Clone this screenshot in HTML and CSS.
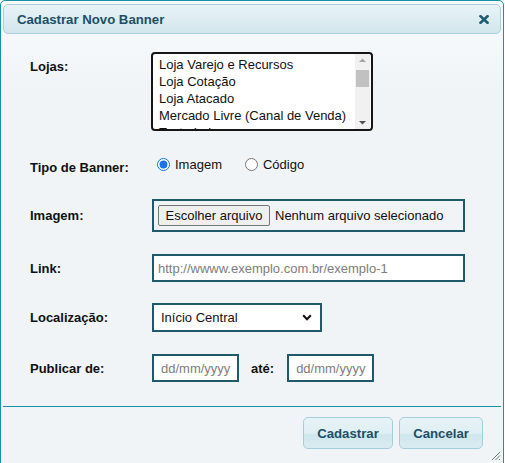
FILE: index.html
```html
<!DOCTYPE html>
<html lang="pt-BR">
<head>
<meta charset="utf-8">
<title>Cadastrar Novo Banner</title>
<link rel="stylesheet" href="styles.css">
</head>
<body>
<div class="dialog">
  <div class="titlebar">
    <span class="title">Cadastrar Novo Banner</span>
    <svg class="close" width="10" height="9" viewBox="0 0 10 9" aria-label="Fechar">
      <path d="M1.5 1.2 L8.5 7.8 M8.5 1.2 L1.5 7.8" stroke="#1e5a72" stroke-width="2.6" stroke-linecap="square" fill="none"/>
    </svg>
  </div>
  <div class="content">
    <div class="row row-lojas">
      <label class="lbl lbl-top">Lojas:</label>
      <div class="listbox">
        <div class="options">
          <div class="opt">Loja Varejo e Recursos</div>
          <div class="opt">Loja Cotação</div>
          <div class="opt">Loja Atacado</div>
          <div class="opt">Mercado Livre (Canal de Venda)</div>
          <div class="opt">Teste Loja</div>
        </div>
        <div class="scrollbar">
          <svg class="arrow" width="15" height="12" viewBox="0 0 15 12"><path d="M4 8 L7.5 4.5 L11 8 Z" fill="#a3a3a3"/></svg>
          <div class="thumb"></div>
          <div class="track"></div>
          <svg class="arrow" width="15" height="12" viewBox="0 0 15 12"><path d="M4 4 L7.5 7.5 L11 4 Z" fill="#505050"/></svg>
        </div>
      </div>
    </div>
    <div class="row row-tipo">
      <label class="lbl lbl-tipo">Tipo de Banner:</label>
      <div class="radios">
        <label class="radio"><input type="radio" name="tipo" checked> Imagem</label>
        <label class="radio radio-2"><input type="radio" name="tipo"> Código</label>
      </div>
    </div>
    <div class="row row-img">
      <label class="lbl">Imagem:</label>
      <div class="filebox">
        <button class="filebtn" type="button">Escolher arquivo</button>
        <span class="filename">Nenhum arquivo selecionado</span>
      </div>
    </div>
    <div class="row row-link">
      <label class="lbl">Link:</label>
      <input class="field field-link" type="text" placeholder="http://wwww.exemplo.com.br/exemplo-1">
    </div>
    <div class="row row-loc">
      <label class="lbl">Localização:</label>
      <div class="selectbox">
        <select class="sel">
          <option>Início Central</option>
        </select>
        <svg class="chev" width="10" height="7" viewBox="0 0 10 7"><path d="M1.2 1.3 L5 5.2 L8.8 1.3" stroke="#111" stroke-width="2" fill="none"/></svg>
      </div>
    </div>
    <div class="row row-pub">
      <label class="lbl">Publicar de:</label>
      <input class="field field-date" type="text" placeholder="dd/mm/yyyy">
      <span class="ate">até:</span>
      <input class="field field-date" type="text" placeholder="dd/mm/yyyy">
    </div>
  </div>
  <div class="buttonpane">
    <button class="btn btn-cad" type="button">Cadastrar</button>
    <button class="btn btn-can" type="button">Cancelar</button>
  </div>
  <svg class="resize" width="12" height="12" viewBox="0 0 12 12">
    <path d="M11 3 L3 11 M11 6.5 L6.5 11 M11 10 L10 11" stroke="#777" stroke-width="1" fill="none"/>
  </svg>
</div>
</body>
</html>
```
FILE: styles.css
```css
html, body {
  margin: 0;
  padding: 0;
  background: #ffffff;
  overflow: hidden;
}
body {
  font-family: "Liberation Sans", Arial, sans-serif;
  font-size: 13px;
  color: #111;
}
.dialog {
  position: relative;
  box-sizing: border-box;
  width: 504px;
  height: 480px;
  border: 1px solid #1791ad;
  border-radius: 5px 5px 0 0;
  padding: 3px 2px 0 2px;
  background: linear-gradient(#f7f9fb 0px, #f5f8fa 40px, #f0f4f7 90px, #f0f4f7 100%);
  display: flex;
  flex-direction: column;
}
.titlebar {
  box-sizing: border-box;
  height: 30px;
  border: 1px solid #a8d1dd;
  border-radius: 5px;
  background: linear-gradient(#e8f3f6, #d2e7ed);
  display: flex;
  align-items: center;
  justify-content: space-between;
  padding: 0 11px 0 13px;
}
.title {
  font-weight: bold;
  font-size: 13.2px;
  color: #1d4f66;
  padding-top: 1px;
}
.close {
  display: block;
}
.content {
  padding: 18px 0 24px 27px;
  display: flex;
  flex-direction: column;
}
.row {
  display: flex;
  align-items: center;
}
.lbl {
  width: 122px;
  flex: none;
  font-weight: bold;
  line-height: 15px;
  color: #111;
}
.row-lojas {
  align-items: flex-start;
}
.lbl-top {
  padding-top: 7px;
}
.listbox {
  box-sizing: border-box;
  width: 222px;
  height: 79px;
  margin-left: -1px;
  border: 2px solid #161616;
  border-radius: 4px;
  background: #fff;
  display: flex;
  overflow: hidden;
}
.options {
  flex: 1;
  padding: 2px 0 0 6px;
  overflow: hidden;
}
.opt {
  line-height: 17px;
  white-space: nowrap;
  color: #111;
}
.scrollbar {
  width: 15px;
  margin-right: 1px;
  background: #f1f1f1;
  display: flex;
  flex-direction: column;
  align-items: center;
}
.arrow {
  display: block;
  flex: none;
}
.thumb {
  width: 13px;
  height: 17px;
  margin-top: 4px;
  background: #c1c1c1;
  flex: none;
}
.track {
  flex: 1;
}
.row-tipo {
  margin-top: 23px;
  align-items: flex-start;
  height: 20px;
}
.lbl-tipo {
  padding-top: 6px;
}
.radios {
  display: flex;
  align-items: center;
  height: 20px;
}
.radio {
  display: flex;
  align-items: center;
  color: #111;
}
.radio input {
  width: 13px;
  height: 13px;
  margin: 0 5px 0 5px;
  accent-color: #1a73e8;
}
.radio-2 {
  margin-left: 18px;
}
.row-img {
  margin-top: 25px;
}
.filebox {
  box-sizing: border-box;
  width: 313px;
  height: 33px;
  border: 2px solid #1f5a6b;
  display: flex;
  align-items: center;
  padding-left: 4px;
}
.filebtn {
  box-sizing: border-box;
  height: 21px;
  width: 112px;
  font-family: "Liberation Sans", Arial, sans-serif;
  font-size: 13px;
  color: #111;
  background: #efefef;
  border: 1px solid #767676;
  border-radius: 2px;
  padding: 0;
  margin: 0 5px 0 0;
}
.filename {
  color: #111;
}
.field {
  box-sizing: border-box;
  border: 2px solid #1f5a6b;
  background: #fff;
  font-family: "Liberation Sans", Arial, sans-serif;
  font-size: 13px;
  color: #111;
  outline: none;
  margin: 0;
}
.field::placeholder {
  color: #7d7d7d;
}
.row-link {
  margin-top: 22px;
}
.field-link {
  width: 313px;
  height: 28px;
  padding: 0 0 0 4px;
}
.row-loc {
  margin-top: 21px;
}
.selectbox {
  box-sizing: border-box;
  width: 170px;
  height: 29px;
  border: 2px solid #1f5a6b;
  background: #fff;
  display: flex;
  align-items: center;
  padding-right: 8px;
}
.sel {
  flex: 1;
  -webkit-appearance: none;
  appearance: none;
  border: none;
  background: transparent;
  font-family: "Liberation Sans", Arial, sans-serif;
  font-size: 13px;
  color: #111;
  padding: 0 0 0 7px;
  margin: 0;
  outline: none;
  height: 100%;
}
.chev {
  display: block;
  flex: none;
}
.row-pub {
  margin-top: 22px;
}
.field-date {
  width: 87px;
  height: 28px;
  padding: 0 0 0 7px;
}
.ate {
  font-weight: bold;
  margin: 0 13px 0 12px;
  color: #111;
}
.buttonpane {
  border-top: 1px solid #1a8fab;
  display: flex;
  justify-content: flex-end;
  padding: 10px 18px 0 0;
  gap: 6px;
}
.btn {
  box-sizing: border-box;
  height: 32px;
  border: 1px solid #a2cfdc;
  border-radius: 5px;
  background: linear-gradient(#e7f3f6 0%, #dfeff3 50%, #d0e7ed 56%, #d9ecf1 100%);
  font-family: "Liberation Sans", Arial, sans-serif;
  font-weight: bold;
  font-size: 13.2px;
  color: #1d4f66;
  padding: 0;
  margin: 0;
}
.btn-cad {
  width: 90px;
}
.btn-can {
  width: 84px;
}
.resize {
  position: absolute;
  right: 2px;
  top: 448px;
  display: block;
}
```
